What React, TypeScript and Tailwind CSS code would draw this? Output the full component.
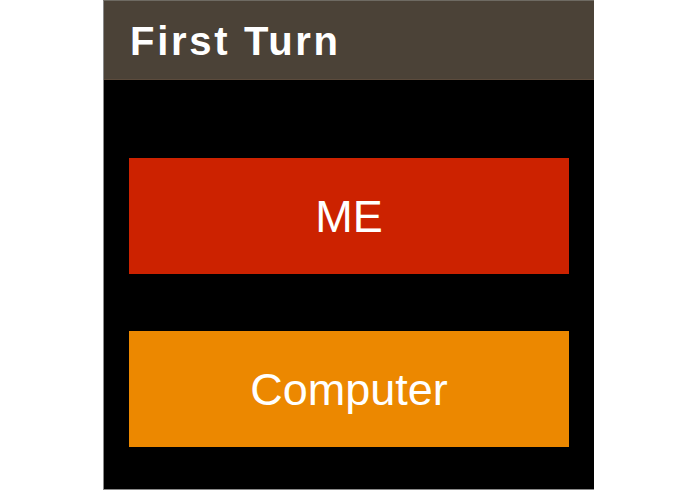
import React from 'react';

const App: React.FC = () => {
  const choices = [
    { label: 'ME', color: 'bg-[#cc2200]' },
    { label: 'Computer', color: 'bg-[#ec8800]' }
  ];

  return (
    <div className="w-[695px] h-[494px] bg-white font-['Liberation_Sans',Arial,sans-serif]">
      <div className="ml-[103px] w-[491px] h-[490px] flex flex-col border-l border-b border-[#8a8a8a] border-t border-t-[#6e6a62]">
        {/* Header */}
        <div className="h-[79px] bg-[#4b4237] border-b border-[#5c4b3c] flex items-center pl-[26px]">
          <h1 className="text-white font-bold text-[40px] tracking-[2.7px] leading-none pt-[1px]">First Turn</h1>
        </div>

        {/* Choices */}
        <div className="flex-1 bg-black px-[25px] pt-[78px] flex flex-col gap-[57px]">
          {choices.map((c) => (
            <button
              key={c.label}
              className={`${c.color} h-[116px] w-[440px] text-white text-[45px] leading-none flex items-center justify-center`}
            >
              {c.label}
            </button>
          ))}
        </div>
      </div>
    </div>
  );
};

export default App;
